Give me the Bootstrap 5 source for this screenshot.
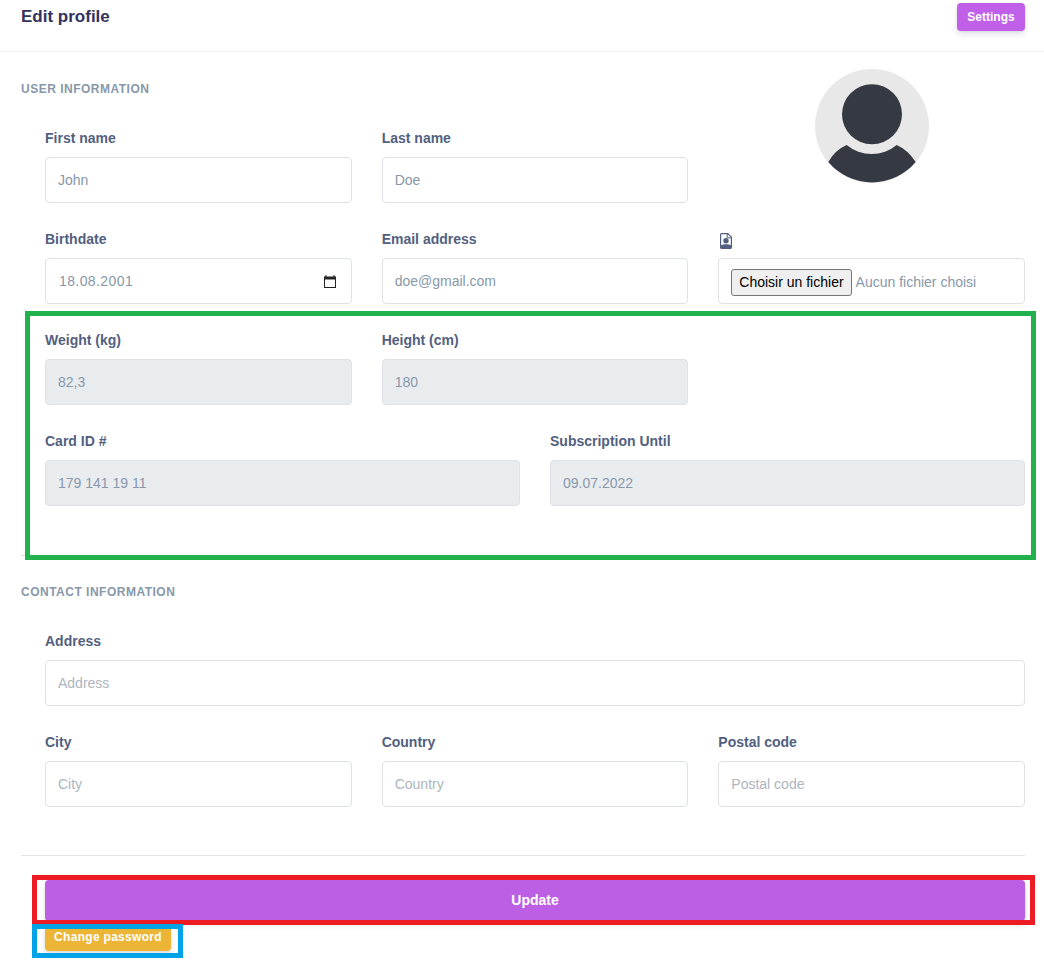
<!DOCTYPE html>
<html lang="en">
<head>
  <title>Edit profile</title>
  <meta name="viewport" content="width=device-width, initial-scale=1.0">
  <link href="https://cdn.jsdelivr.net/npm/bootstrap@5.3.0/dist/css/bootstrap.min.css" rel="stylesheet">
  <script src="https://cdn.jsdelivr.net/npm/bootstrap@5.3.0/dist/js/bootstrap.bundle.min.js"></script>
  <style>
    body {
      font-family: "Liberation Sans", Arial, sans-serif;
      font-size: 14px;
      background: #fff;
      color: #525f7f;
    }

    .page-wrap {
      position: relative;
      height: 963px;
      overflow: hidden;
    }

    .head-bar {
      height: 52px;
      padding: 3px 19px 0 21px;
      border-bottom: 1px solid #edeff2;
    }

    .head-bar h3 {
      font-size: 17px;
      line-height: 20px;
      font-weight: 700;
      color: #32325d;
      margin: 4px 0 0;
    }

    .form-area {
      padding: 28px 19px 0 21px;
    }

    .section-title {
      font-size: 12px;
      line-height: 18px;
      font-weight: 700;
      letter-spacing: .5px;
      text-transform: uppercase;
      color: #8898aa;
      margin: 0 0 29.5px;
    }

    .section-title.contact-title {
      margin-bottom: 30.5px;
    }

    .fields {
      padding-left: 24px;
    }

    .fields .row {
      --bs-gutter-x: 30px;
    }

    .field {
      margin-bottom: 26px;
    }

    .field label {
      display: block;
      font-size: 14px;
      line-height: 21px;
      font-weight: 700;
      color: #525f7f;
      margin-bottom: 8px;
    }

    .field .form-control {
      height: 46px;
      font-size: 14px;
      padding: 10px 12px;
      color: #8898aa;
      border: 1px solid #dee2e6;
      border-radius: 4px;
      box-shadow: none;
    }

    .field .form-control::placeholder {
      color: #adb5bd;
    }

    .field .form-control:disabled {
      background: #e9ecef;
    }

    .date-wrap {
      position: relative;
    }

    .date-wrap .form-control {
      padding-left: 13px;
      letter-spacing: .4px;
    }

    .date-wrap svg {
      position: absolute;
      right: 16px;
      top: 17px;
    }

    .file-box {
      display: flex;
      align-items: center;
      gap: 4px;
    }

    .field .file-box {
      padding: 3px 12px 0;
    }

    .file-box button {
      height: 27px;
      padding: 0 7px;
      font-family: inherit;
      font-size: 14px;
      color: #000;
      background: #efefef;
      border: 1px solid #767676;
      border-radius: 3px;
    }

    .avatar-col {
      margin-top: -59px;
      height: 127px;
    }

    .icon-label {
      height: 21px;
      margin-bottom: 8px;
      padding: 4px 0 0 2px;
    }

    .icon-label svg {
      display: block;
    }

    .rule {
      border: 0;
      border-top: 1px solid #e4e5e7;
      opacity: 1;
      margin: 0;
    }

    .rule-a {
      margin: 23px 0 27px;
    }

    .rule-b {
      margin: 22px 0 24px;
    }

    .btn-update, .btn-settings, .btn-pass {
      color: #fff;
      font-weight: 700;
      border: 0;
      border-radius: 4px;
      box-shadow: 0 4px 6px rgba(50,50,93,.11), 0 1px 3px rgba(0,0,0,.08);
    }

    .btn-update {
      display: block;
      width: 100%;
      height: 41px;
      font-size: 14px;
      background: #bd5fe5;
      margin-bottom: 5px;
    }

    .btn-settings {
      width: 68px;
      height: 28px;
      padding: 0;
      font-size: 12px;
      background: #c05fe8;
    }

    .btn-pass {
      width: 126px;
      height: 25px;
      padding: 0 0 3px;
      font-size: 12px;
      letter-spacing: .3px;
      background: #ecb536;
    }

    /* coloured boxes drawn on top of the screenshot */
    .mark-box {
      position: absolute;
      border: 5px solid;
      pointer-events: none;
    }

    .mark-green {
      left: 25px;
      top: 311px;
      width: 1011px;
      height: 249px;
      border-color: #22b14c;
    }

    .mark-red {
      left: 32px;
      top: 875px;
      width: 1003px;
      height: 50px;
      border-color: #ed1c24;
    }

    .mark-blue {
      left: 32px;
      top: 924px;
      width: 151px;
      height: 34px;
      border-color: #00a2e8;
    }
  </style>
</head>
<body>
  <div class="page-wrap">
    <div class="head-bar d-flex justify-content-between align-items-start">
      <h3>Edit profile</h3>
      <button class="btn-settings" type="button">Settings</button>
    </div>

    <form class="form-area">
      <h6 class="section-title">User information</h6>
      <div class="fields">
        <div class="row">
          <div class="col-4 field">
            <label>First name</label>
            <input class="form-control" type="text" value="John">
          </div>
          <div class="col-4 field">
            <label>Last name</label>
            <input class="form-control" type="text" value="Doe">
          </div>
          <div class="col-4 avatar-col d-flex justify-content-center align-items-start">
            <svg width="114" height="114" viewBox="0 0 114 114">
              <circle cx="57" cy="57" r="57" fill="#e8e8e8"/>
              <circle cx="57" cy="45.3" r="30" fill="#353a42"/>
              <path d="M13.300 93 Q20 81 31.700 76 A39 39 0 0 0 81.700 76 Q93 81 100.700 93 A57 57 0 0 1 13.300 93 Z" fill="#353a42"/>
            </svg>
          </div>
        </div>
        <div class="row">
          <div class="col-4 field">
            <label>Birthdate</label>
            <div class="date-wrap">
              <input class="form-control" type="text" value="18.08.2001">
              <svg width="12" height="13" viewBox="0 0 12 13">
                <path d="M2.500 0v1.500h7V0h1v1.500H12V13H0V1.500h1.500V0zM1 4.500V12h10V4.500z" fill="#222"/>
              </svg>
            </div>
          </div>
          <div class="col-4 field">
            <label>Email address</label>
            <input class="form-control" type="email" value="doe@gmail.com">
          </div>
          <div class="col-4 field">
            <div class="icon-label">
              <svg width="12" height="16" viewBox="0 0 12 16">
                <path d="M1.500 .6H7.800L11.400 4.200V14.500a.9.900 0 0 1-.9.900H1.500a.9.900 0 0 1-.9-.900V1.500a.9.900 0 0 1 .9-.9z" fill="#fff" stroke="#525f7f" stroke-width="1.200"/>
                <path d="M7.200 .6V4.800H11.400" fill="none" stroke="#525f7f" stroke-width="1"/>
                <circle cx="6" cy="7.800" r="2.700" fill="#525f7f"/>
                <path d="M.6 12.700C2 11.500 4 11.200 6 11.200s4 .3 5.400 1.500V14.500a.9.900 0 0 1-.9.900H1.500a.9.900 0 0 1-.9-.900z" fill="#525f7f"/>
              </svg>
            </div>
            <div class="form-control file-box">
              <button type="button">Choisir un fichier</button>
              <span>Aucun fichier choisi</span>
            </div>
          </div>
        </div>
        <div class="row">
          <div class="col-4 field">
            <label>Weight (kg)</label>
            <input class="form-control" type="text" value="82,3" disabled>
          </div>
          <div class="col-4 field">
            <label>Height (cm)</label>
            <input class="form-control" type="text" value="180" disabled>
          </div>
        </div>
        <div class="row">
          <div class="col-6 field">
            <label>Card ID #</label>
            <input class="form-control" type="text" value="179 141 19 11" disabled>
          </div>
          <div class="col-6 field">
            <label>Subscription Until</label>
            <input class="form-control" type="text" value="09.07.2022" disabled>
          </div>
        </div>
      </div>

      <hr class="rule rule-a">

      <h6 class="section-title contact-title">Contact information</h6>
      <div class="fields">
        <div class="row">
          <div class="col-12 field">
            <label>Address</label>
            <input class="form-control" type="text" placeholder="Address">
          </div>
        </div>
        <div class="row">
          <div class="col-4 field">
            <label>City</label>
            <input class="form-control" type="text" placeholder="City">
          </div>
          <div class="col-4 field">
            <label>Country</label>
            <input class="form-control" type="text" placeholder="Country">
          </div>
          <div class="col-4 field">
            <label>Postal code</label>
            <input class="form-control" type="text" placeholder="Postal code">
          </div>
        </div>
      </div>

      <hr class="rule rule-b">

      <div class="fields">
        <button class="btn-update" type="button">Update</button>
        <button class="btn-pass" type="button">Change password</button>
      </div>
    </form>

    <div class="mark-box mark-green"></div>
    <div class="mark-box mark-red"></div>
    <div class="mark-box mark-blue"></div>
  </div>
</body>
</html>
